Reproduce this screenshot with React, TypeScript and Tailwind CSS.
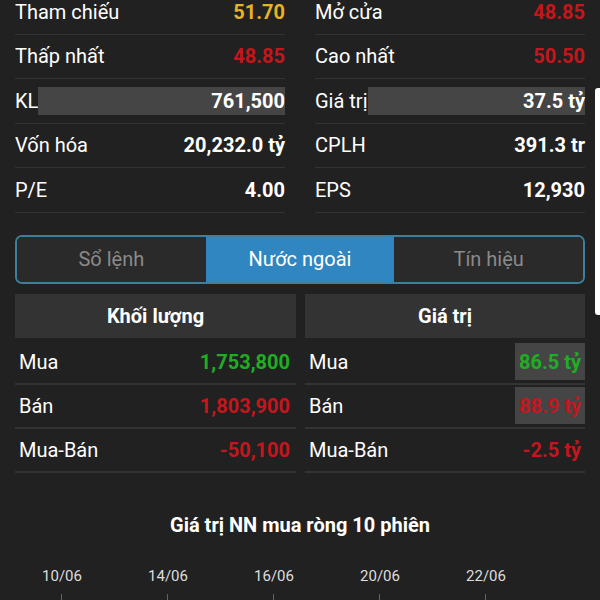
import React from 'react';

// --- stat rows (top grid) ---
type Stat = { label: string; value: string; color?: string; bar?: boolean };

const leftStats: Stat[] = [
  { label: 'Tham chiếu', value: '51.70', color: 'text-[#e6b422]' },
  { label: 'Thấp nhất', value: '48.85', color: 'text-[#c4161c]' },
  { label: 'KL', value: '761,500', bar: true },
  { label: 'Vốn hóa', value: '20,232.0 tỷ' },
  { label: 'P/E', value: '4.00' },
];

const rightStats: Stat[] = [
  { label: 'Mở cửa', value: '48.85', color: 'text-[#c4161c]' },
  { label: 'Cao nhất', value: '50.50', color: 'text-[#c4161c]' },
  { label: 'Giá trị', value: '37.5 tỷ', bar: true },
  { label: 'CPLH', value: '391.3 tr' },
  { label: 'EPS', value: '12,930' },
];

const volRows = [
  { label: 'Mua', value: '1,753,800', color: 'text-[#1fae23]' },
  { label: 'Bán', value: '1,803,900', color: 'text-[#c4161c]' },
  { label: 'Mua-Bán', value: '-50,100', color: 'text-[#c4161c]' },
];

const valRows = [
  { label: 'Mua', value: '86.5 tỷ', color: 'text-[#1fae23]', box: true },
  { label: 'Bán', value: '88.9 tỷ', color: 'text-[#c4161c]', box: true },
  { label: 'Mua-Bán', value: '-2.5 tỷ', color: 'text-[#c4161c]', box: false },
];

const dates = ['10/06', '14/06', '16/06', '20/06', '22/06'];

function StatColumn({ items }: { items: Stat[] }) {
  return (
    <div className="flex flex-col">
      {items.map((s, i) => (
        <div key={i} className="h-[44.5px] flex items-center border-b border-[#333333]">
          <span className="text-[20px] text-white shrink-0">{s.label}</span>
          {s.bar ? (
            <div className="flex-1 h-[28px] bg-[#454545] flex items-center justify-end">
              <span className="text-[20px] font-bold text-white">{s.value}</span>
            </div>
          ) : (
            <span className={`ml-auto text-[20px] font-bold ${s.color ?? 'text-white'}`}>{s.value}</span>
          )}
        </div>
      ))}
    </div>
  );
}

export default function App() {
  return (
    <div className="w-[600px] h-[600px] overflow-hidden bg-[#212121] relative font-['Roboto',sans-serif]">
      {/* scrollbar thumb */}
      <div className="absolute right-0 top-[88px] w-[5px] h-[227px] bg-white rounded-l-[3px]" />

      <div className="px-[15px] -mt-[10px]">
        {/* Stats */}
        <div className="grid grid-cols-2 gap-[30px]">
          <StatColumn items={leftStats} />
          <StatColumn items={rightStats} />
        </div>

        {/* Tabs */}
        <div className="mt-[22px] h-[49px] grid grid-cols-3 border-2 border-[#3f7f9c] rounded-[7px] overflow-hidden">
          <div className="flex items-center justify-center bg-[#2a2a2a] text-[20px] text-[#8a8a8a]">Sổ lệnh</div>
          <div className="flex items-center justify-center bg-[#2f86c0] text-[20px] text-white">Nước ngoài</div>
          <div className="flex items-center justify-center bg-[#2a2a2a] text-[20px] text-[#8a8a8a]">Tín hiệu</div>
        </div>

        {/* Foreign trade tables */}
        <div className="mt-[10px] grid grid-cols-[281px_280px] gap-[9px]">
          <div>
            <div className="h-[44px] mb-[3px] bg-[#333333] flex items-center justify-center text-[20px] font-bold text-white">
              Khối lượng
            </div>
            {volRows.map((r, i) => (
              <div key={i} className="h-[44px] flex items-center pl-[4px] pr-[6px] border-b-2 border-[#333333]">
                <span className="text-[20px] text-white">{r.label}</span>
                <span className={`ml-auto text-[20px] font-bold ${r.color}`}>{r.value}</span>
              </div>
            ))}
          </div>
          <div>
            <div className="h-[44px] mb-[3px] bg-[#333333] flex items-center justify-center text-[20px] font-bold text-white">
              Giá trị
            </div>
            {valRows.map((r, i) => (
              <div key={i} className="h-[44px] flex items-center pl-[4px] border-b-2 border-[#333333]">
                <span className="text-[20px] text-white">{r.label}</span>
                {r.box ? (
                  <span className={`ml-auto h-[37px] w-[70px] bg-[#454545] flex items-center justify-end pr-[4px] text-[20px] font-bold ${r.color}`}>
                    {r.value}
                  </span>
                ) : (
                  <span className={`ml-auto pr-[4px] text-[20px] font-bold ${r.color}`}>{r.value}</span>
                )}
              </div>
            ))}
          </div>
        </div>
      </div>

      {/* Chart */}
      <div className="mt-[37px] text-center text-[20px] font-bold text-white">Giá trị NN mua ròng 10 phiên</div>
      <div className="mt-[27px] relative h-[60px]">
        {dates.map((d, i) => (
          <div key={d} className="absolute top-0 flex flex-col items-center" style={{ left: 62 + i * 106, transform: 'translateX(-50%)' }}>
            <span className="text-[15px] text-[#dddddd] leading-[18px]">{d}</span>
            <span className="mt-[9px] w-px h-[20px] bg-[#666666]" />
          </div>
        ))}
      </div>
    </div>
  );
}
